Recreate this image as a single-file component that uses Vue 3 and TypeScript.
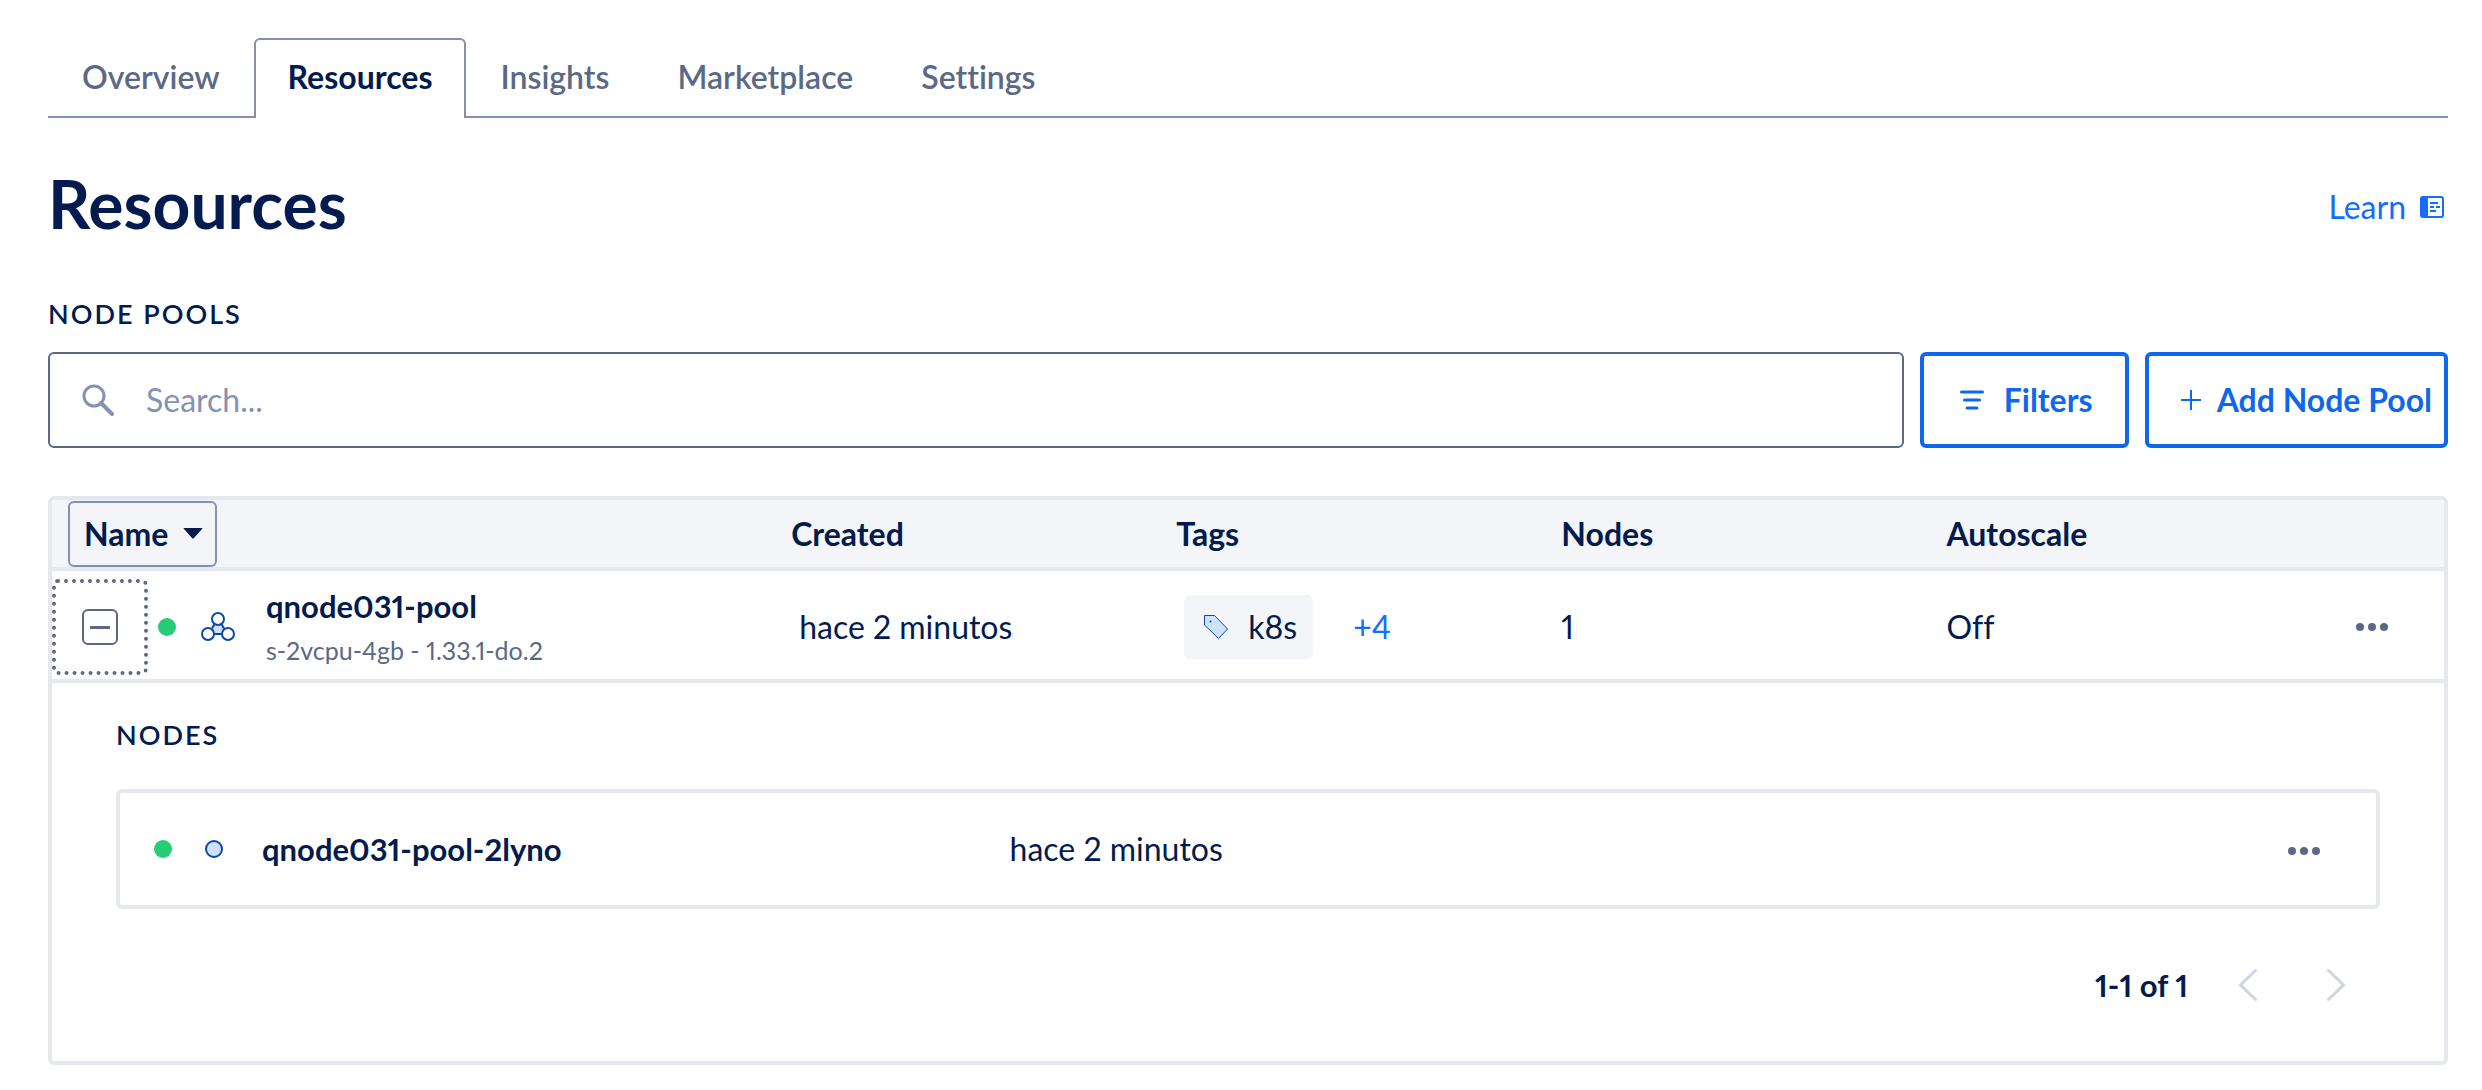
<script setup lang="ts">
import { ref } from 'vue'

interface Tab {
  label: string
  active: boolean
}

interface PoolNode {
  name: string
  created: string
}

interface NodePool {
  name: string
  spec: string
  created: string
  tag: string
  moreTags: number
  count: number
  autoscale: string
  nodes: PoolNode[]
}

const tabs: Tab[] = [
  { label: 'Overview', active: false },
  { label: 'Resources', active: true },
  { label: 'Insights', active: false },
  { label: 'Marketplace', active: false },
  { label: 'Settings', active: false },
]

const query = ref('')
const expanded = ref(true)

const pool: NodePool = {
  name: 'qnode031-pool',
  spec: 's-2vcpu-4gb - 1.33.1-do.2',
  created: 'hace 2 minutos',
  tag: 'k8s',
  moreTags: 4,
  count: 1,
  autoscale: 'Off',
  nodes: [{ name: 'qnode031-pool-2lyno', created: 'hace 2 minutos' }],
}
</script>

<template>
  <main class="page">
    <nav class="tabs" aria-label="Cluster sections">
      <a
        v-for="tab in tabs"
        :key="tab.label"
        href="#"
        class="tab"
        :class="{ 'tab--active': tab.active }"
        :aria-current="tab.active ? 'page' : undefined"
        >{{ tab.label }}</a
      >
    </nav>

    <header class="heading">
      <h1 class="title">Resources</h1>
      <a href="#" class="learn">
        Learn
        <svg class="learn-icon" viewBox="0 0 24 22" aria-hidden="true">
          <rect x="1" y="1" width="22" height="20" rx="2" fill="#fff" stroke="currentColor" stroke-width="2" />
          <path d="M2 1h6v20H2z" fill="currentColor" />
          <path d="M10 7h8M10 11h4M16 11h4M10 15h6" stroke="currentColor" stroke-width="2" />
        </svg>
      </a>
    </header>

    <h2 class="caption">NODE POOLS</h2>

    <div class="toolbar">
      <label class="search">
        <svg class="search-icon" viewBox="0 0 32 32" aria-hidden="true">
          <circle cx="12" cy="12" r="10" fill="none" stroke="currentColor" stroke-width="3" />
          <path d="M19 19l11 11" fill="none" stroke="currentColor" stroke-width="4" stroke-linecap="round" />
        </svg>
        <input v-model="query" type="text" class="search-input" placeholder="Search..." aria-label="Search" />
      </label>
      <button type="button" class="btn btn--filters">
        <svg class="filters-icon" viewBox="0 0 24 20" aria-hidden="true">
          <path d="M1.500 2h21M4.500 10h15M7 18h10" stroke="currentColor" stroke-width="3" stroke-linecap="round" />
        </svg>
        Filters
      </button>
      <button type="button" class="btn btn--add">
        <svg class="plus-icon" viewBox="0 0 20 20" aria-hidden="true">
          <path d="M10 0v20M0 10h20" stroke="currentColor" stroke-width="2" />
        </svg>
        Add Node Pool
      </button>
    </div>

    <section class="card">
      <table class="pools">
        <colgroup>
          <col class="col-name" />
          <col class="col-data" />
          <col class="col-data" />
          <col class="col-data" />
          <col class="col-data" />
          <col />
        </colgroup>
        <thead>
          <tr>
            <th class="name-head" scope="col">
              <button type="button" class="sort">
                Name
                <svg class="sort-icon" viewBox="0 0 20 11" aria-hidden="true">
                  <path d="M1 0h18q1 0 0 1l-8 9q-1 1-2 0L1 1q-1-1 0-1z" fill="currentColor" />
                </svg>
              </button>
            </th>
            <th scope="col">Created</th>
            <th scope="col">Tags</th>
            <th scope="col">Nodes</th>
            <th scope="col">Autoscale</th>
            <td></td>
          </tr>
        </thead>
        <tbody>
          <tr class="pool-row">
            <td>
              <div class="pool-name">
                <button
                  type="button"
                  class="toggle"
                  aria-label="Toggle nodes"
                  :aria-expanded="expanded"
                  @click="expanded = !expanded"
                >
                  <svg class="toggle-icon" viewBox="0 0 36 36" aria-hidden="true">
                    <rect x="1" y="1" width="34" height="34" rx="5" fill="none" stroke="currentColor" stroke-width="2" />
                    <path d="M8 18.500h20" stroke="currentColor" stroke-width="3" />
                    <path v-if="!expanded" d="M18 8v20" stroke="currentColor" stroke-width="3" />
                  </svg>
                </button>
                <span class="status"></span>
                <svg class="cluster-icon" viewBox="0 0 34 30" aria-hidden="true">
                  <path d="M17 11l-6 5v6h12v-6z" fill="#cfe0f8" />
                  <path d="M13.500 12l-2.500 4.500M20.500 12l2.500 4.500M12 22h10" stroke="#0a49a8" stroke-width="2" />
                  <circle cx="17" cy="7" r="6" fill="#fff" stroke="#0a49a8" stroke-width="2" />
                  <circle cx="7" cy="22" r="6" fill="#fff" stroke="#0a49a8" stroke-width="2" />
                  <circle cx="27" cy="22" r="6" fill="#fff" stroke="#0a49a8" stroke-width="2" />
                </svg>
                <div class="pool-text">
                  <a href="#" class="name-link">{{ pool.name }}</a>
                  <span class="spec">{{ pool.spec }}</span>
                </div>
              </div>
            </td>
            <td class="indent">{{ pool.created }}</td>
            <td class="indent">
              <div class="tags">
                <span class="tag">
                  <svg class="tag-icon" viewBox="0 0 24 24" aria-hidden="true">
                    <path
                      d="M.500 .500h10l13 13.500-9 9.500L.500 10z"
                      fill="#cfe2fb"
                      stroke="#0a49a8"
                      stroke-linejoin="round"
                    />
                    <circle cx="6.500" cy="6.500" r="1" fill="#0a49a8" />
                  </svg>
                  {{ pool.tag }}
                </span>
                <a href="#" class="more">+{{ pool.moreTags }}</a>
              </div>
            </td>
            <td>{{ pool.count }}</td>
            <td>{{ pool.autoscale }}</td>
            <td class="actions">
              <button type="button" class="menu" aria-label="Pool actions">
                <svg class="menu-icon" viewBox="0 0 32 8" aria-hidden="true">
                  <circle cx="4" cy="4" r="4" /><circle cx="16" cy="4" r="4" /><circle cx="28" cy="4" r="4" />
                </svg>
              </button>
            </td>
          </tr>
          <tr v-if="expanded">
            <td colspan="6">
              <div class="detail">
                <h3 class="caption">NODES</h3>
                <ul class="nodes">
                  <li v-for="node in pool.nodes" :key="node.name" class="node">
                    <div class="node-name">
                      <span class="status"></span>
                      <span class="ring"></span>
                      <a href="#" class="name-link">{{ node.name }}</a>
                    </div>
                    <span class="node-created">{{ node.created }}</span>
                    <button type="button" class="menu" aria-label="Node actions">
                      <svg class="menu-icon" viewBox="0 0 32 8" aria-hidden="true">
                        <circle cx="4" cy="4" r="4" /><circle cx="16" cy="4" r="4" /><circle cx="28" cy="4" r="4" />
                      </svg>
                    </button>
                  </li>
                </ul>
                <div class="pager">
                  <span class="range">1-1 of 1</span>
                  <button type="button" class="page-btn" aria-label="Previous page" disabled>
                    <svg class="chevron" viewBox="0 0 18 32" aria-hidden="true">
                      <path d="M16.500 1.500L1.500 16l15 14.500" />
                    </svg>
                  </button>
                  <button type="button" class="page-btn" aria-label="Next page" disabled>
                    <svg class="chevron" viewBox="0 0 18 32" aria-hidden="true">
                      <path d="M1.500 1.500L16.500 16l-15 14.500" />
                    </svg>
                  </button>
                </div>
              </div>
            </td>
          </tr>
        </tbody>
      </table>
    </section>
  </main>
</template>

<style>
body {
  margin: 0;
  background: #fff;
}
</style>

<style scoped>
.page {
  box-sizing: border-box;
  padding: 38px 34px 24px 48px;
  font-family: Lato, 'Open Sans', sans-serif;
  font-size: 32px;
  line-height: 40px;
  font-variant-ligatures: none;
  font-variant-numeric: proportional-nums;
  color: #031b4e;
}

.page *,
.page *::before {
  box-sizing: border-box;
}

a {
  color: inherit;
  text-decoration: none;
}

button {
  padding: 0;
  border: 0;
  background: none;
  font: inherit;
  color: inherit;
  cursor: pointer;
}

svg {
  display: block;
  flex: none;
}

.tabs {
  display: flex;
  height: 80px;
  box-shadow: inset 0 -2px #8390b3;
}

.tab {
  padding: 17px 32px 0;
  border: 2px solid transparent;
  border-bottom: 0;
  font-weight: 600;
  color: #5b6987;
}

.tab--active {
  border-color: #8390b3;
  border-radius: 6px 6px 0 0;
  background: #fff;
  font-weight: 700;
  color: #031b4e;
}

.heading {
  display: flex;
  justify-content: space-between;
  align-items: center;
  margin-top: 46px;
  padding-right: 4px;
}

.title {
  margin: 0;
  font-size: 66px;
  line-height: 80px;
  font-weight: 700;
}

.learn {
  display: flex;
  align-items: center;
  gap: 14px;
  padding-top: 6px;
  color: #136dff;
}

.learn-icon {
  width: 24px;
  height: 22px;
}

.caption {
  margin: 0;
  font-size: 27px;
  line-height: 32px;
  font-weight: 600;
  letter-spacing: 2px;
}

.page > .caption {
  margin-top: 54px;
}

.toolbar {
  display: flex;
  gap: 16px;
  height: 96px;
  margin-top: 22px;
}

.search {
  display: flex;
  flex: 1;
  align-items: center;
  gap: 32px;
  padding: 0 32px;
  border: 2px solid #5b6987;
  border-radius: 6px;
  color: #8492b4;
}

.search-icon {
  width: 32px;
  height: 32px;
}

.search-input {
  flex: 1;
  min-width: 0;
  padding: 0;
  border: 0;
  outline: 0;
  background: none;
  font: inherit;
  color: #031b4e;
}

.search-input::placeholder {
  color: #8492b4;
  opacity: 1;
}

.btn {
  display: flex;
  align-items: center;
  border: 4px solid #0f67ee;
  border-radius: 6px;
  font-weight: 700;
  color: #0f67ee;
  white-space: nowrap;
}

.btn--filters {
  gap: 20px;
  padding: 0 32px 0 36px;
}

.btn--add {
  gap: 16px;
  padding: 0 12px 0 32px;
}

.filters-icon {
  width: 24px;
  height: 20px;
}

.plus-icon {
  width: 20px;
  height: 20px;
}

.card {
  margin-top: 48px;
  border: 4px solid #e5e8ed;
  border-radius: 6px;
}

.pools {
  width: 100%;
  border-spacing: 0;
  table-layout: fixed;
}

.col-name {
  width: 30.900%;
}

.col-data {
  width: 16.100%;
}

.pools th,
.pools td {
  padding: 0;
  text-align: left;
}

.pools thead th,
.pools thead td {
  height: 71px;
  border-bottom: 4px solid #e5e8ed;
  background: #f3f5f9;
  font-weight: 700;
}

.pools .name-head {
  padding-left: 16px;
}

.sort {
  display: flex;
  align-items: center;
  gap: 15px;
  height: 66px;
  padding: 0 12px 0 14px;
  border: 2px solid #8390b3;
  border-radius: 6px;
}

.sort-icon {
  width: 20px;
  height: 11px;
}

.pools .pool-row > td {
  height: 112px;
  padding-top: 4px;
  border-bottom: 4px solid #e5e8ed;
}

.pools td.indent {
  padding-left: 8px;
}

.pool-name {
  display: flex;
  align-items: center;
}

.toggle {
  display: flex;
  justify-content: center;
  align-items: center;
  width: 96px;
  height: 96px;
  border: 4px dotted #5b6987;
  border-radius: 6px;
  color: #5b6987;
}

.toggle-icon {
  width: 36px;
  height: 36px;
}

.status {
  flex: none;
  width: 18px;
  height: 18px;
  border-radius: 50%;
  background: #27cd76;
}

.pool-name .status {
  margin: 0 25px 0 10px;
}

.cluster-icon {
  width: 34px;
  height: 30px;
}

.pool-text {
  display: flex;
  flex-direction: column;
  gap: 6px;
  margin-left: 31px;
}

.name-link {
  font-size: 31px;
  font-weight: 700;
}

.spec {
  font-size: 25px;
  line-height: 36px;
  color: #5b6987;
}

.tags {
  display: flex;
  align-items: center;
  gap: 40px;
}

.tag {
  display: flex;
  align-items: center;
  gap: 20px;
  height: 64px;
  padding: 0 16px 0 20px;
  border-radius: 6px;
  background: #f3f5f9;
}

.tag-icon {
  width: 24px;
  height: 24px;
}

.more {
  color: #136dff;
}

.menu {
  display: flex;
  align-items: center;
  height: 40px;
}

.menu-icon {
  width: 32px;
  height: 8px;
  fill: #5b6987;
}

.actions .menu {
  margin: 0 56px 0 auto;
}

.detail {
  padding: 36px 64px 0;
}

.nodes {
  margin: 38px 0 0;
  padding: 0;
  list-style: none;
}

.node {
  display: flex;
  align-items: center;
  height: 120px;
  padding: 0 56px 0 34px;
  border: 4px solid #e5e8ed;
  border-radius: 6px;
}

.node .menu {
  margin-top: 4px;
}

.node-name {
  display: flex;
  align-items: center;
  width: 39.500%;
}

.ring {
  width: 18px;
  height: 18px;
  margin: 0 39px 0 33px;
  border: 2px solid #0a49a8;
  border-radius: 50%;
  background: #cfe0f8;
}

.node-created {
  flex: 1;
}

.pager {
  display: flex;
  justify-content: flex-end;
  align-items: center;
  height: 152px;
  padding-right: 20px;
}

.range {
  margin-right: 36px;
  font-size: 31px;
  font-weight: 700;
}

.page-btn {
  display: flex;
  justify-content: center;
  width: 48px;
}

.page-btn + .page-btn {
  margin-left: 40px;
}

.chevron {
  width: 18px;
  height: 32px;
  fill: none;
  stroke: #ced4e0;
  stroke-width: 3;
  stroke-linecap: round;
  stroke-linejoin: round;
}
</style>
